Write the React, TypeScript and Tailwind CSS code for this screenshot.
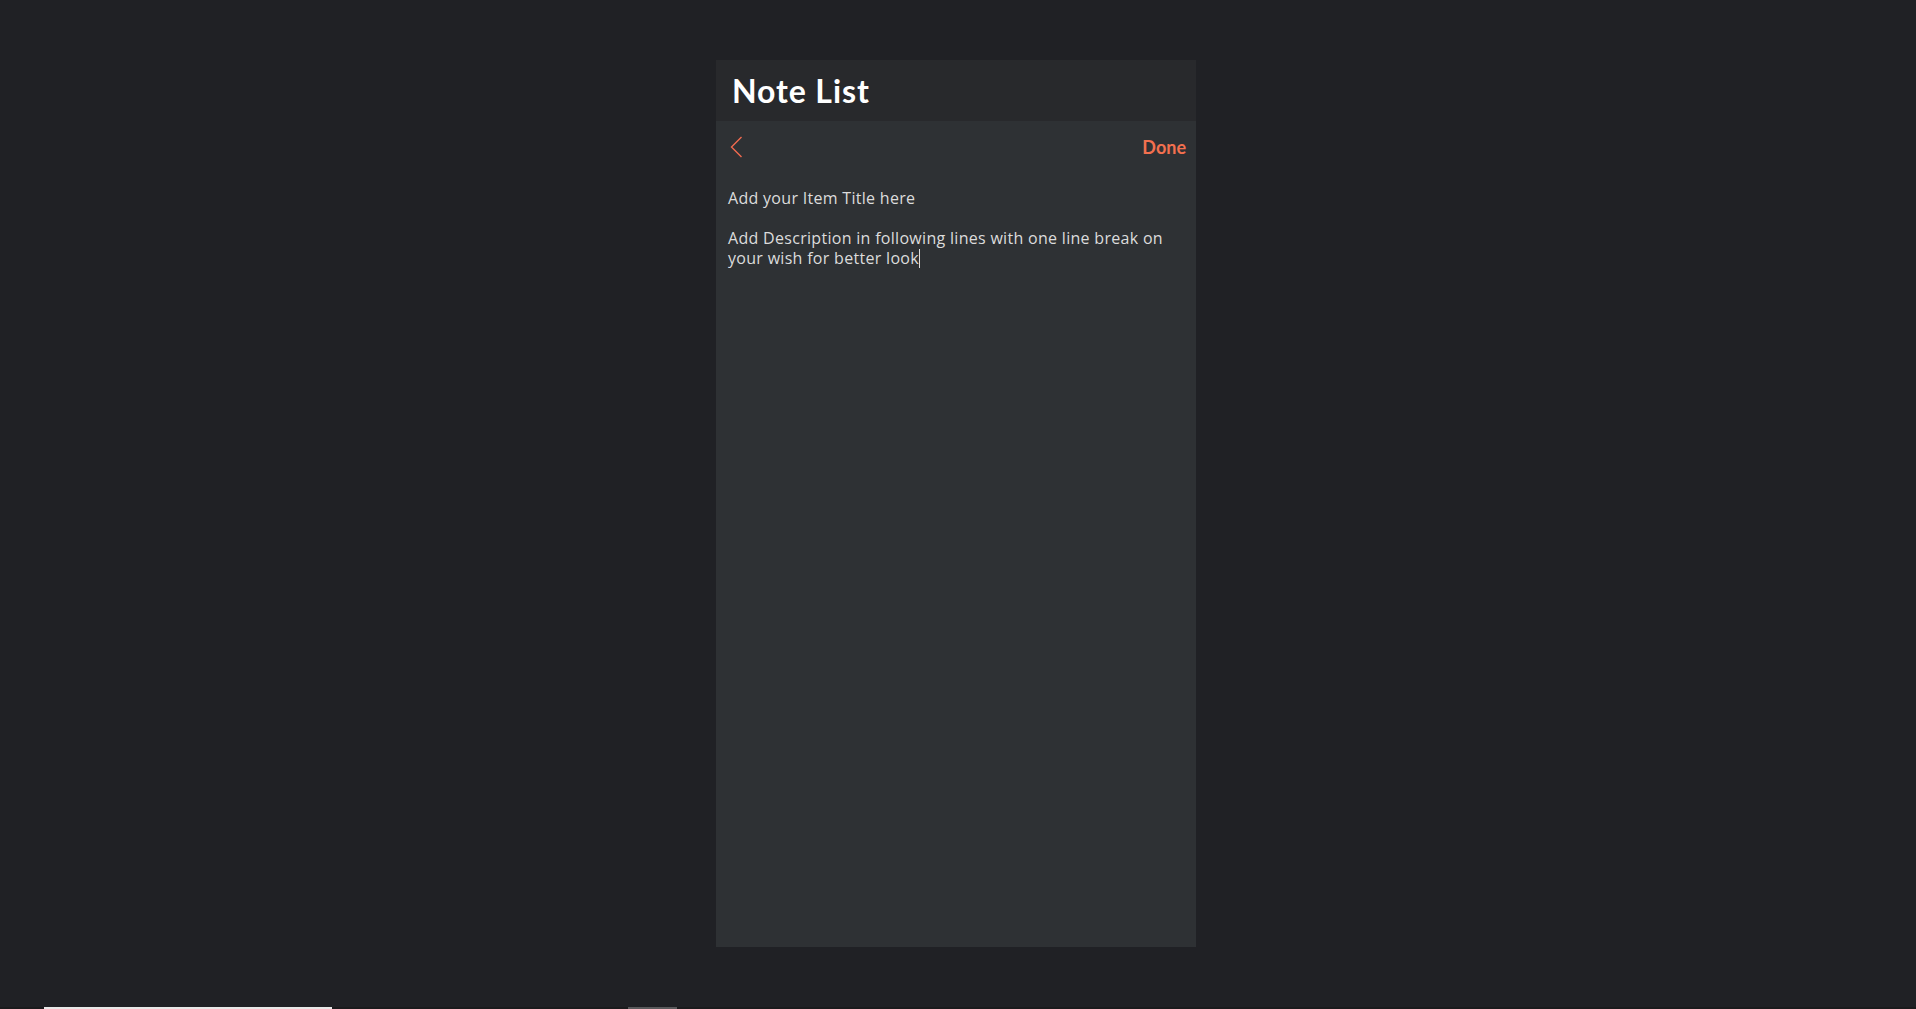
const TITLE = "Add your Item Title here"
const DESCRIPTION = "Add Description in following lines with one line break on your wish for better look"

function BackArrow() {
  return (
    <svg width="13" height="22" viewBox="0 0 13 22" fill="none" stroke="currentColor" strokeWidth="1.4">
      <path d="M11.5 1 L1.5 11 L11.5 21" />
    </svg>
  )
}

function NoteHeader() {
  return (
    <div className="h-[61px] bg-[#28292c] flex items-center pl-[16px]">
      <h1 className="text-[32px] font-bold text-white tracking-[0.9px] font-['Lato',sans-serif]">Note List</h1>
    </div>
  )
}

function EditorToolbar() {
  return (
    <div className="flex items-center justify-between pl-[14px] pr-[10px] pt-[15px] h-[37px]">
      <button className="text-[#f06a4f]">
        <BackArrow />
      </button>
      <button className="text-[18px] font-bold text-[#f3704f] font-['Lato',sans-serif]">Done</button>
    </div>
  )
}

function NoteEditor() {
  return (
    <div className="px-[12px] pt-[30px] text-[16px] leading-[20px] tracking-[0.3px] text-[#dcdcdc] font-['Open_Sans',sans-serif]">
      <p>{TITLE}</p>
      <p className="h-[20px]" />
      <p className="pr-[10px]">
        {DESCRIPTION}
        <span className="inline-block w-px h-[19px] bg-[#dcdcdc] align-[-4px]" />
      </p>
    </div>
  )
}

export default function App() {
  return (
    <div className="h-screen flex flex-col bg-[#202125]">
      <div className="flex-1 flex justify-center pt-[60px]">
        <div className="w-[480px] h-[887px] mr-[4px] flex flex-col">
          <NoteHeader />
          <div className="flex-1 bg-[#2e3134]">
            <EditorToolbar />
            <NoteEditor />
          </div>
        </div>
      </div>
      <div className="h-[2px] bg-[#1b1b1d] relative">
        <div className="absolute left-[44px] w-[288px] h-[2px] bg-[#e8e8e8]" />
        <div className="absolute left-[628px] w-[49px] h-[2px] bg-[#5a5a5c]" />
      </div>
    </div>
  )
}
